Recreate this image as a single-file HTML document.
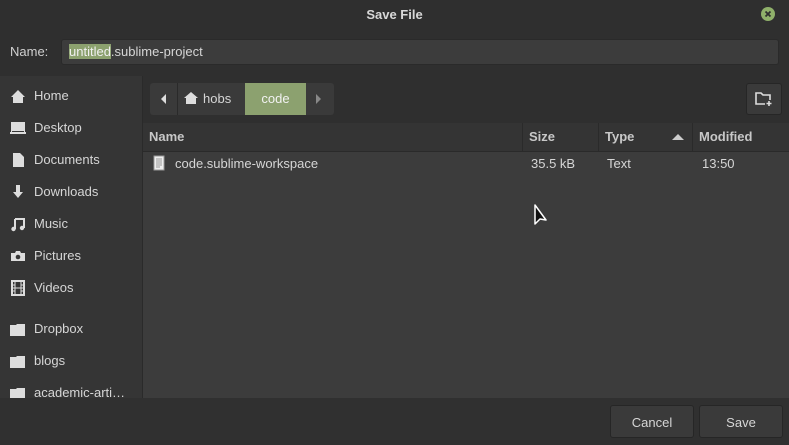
<!DOCTYPE html>
<html><head><style>
*{margin:0;padding:0;box-sizing:border-box}
body{width:789px;height:445px;background:#2f2f2f;font-family:"Liberation Sans","DejaVu Sans",sans-serif;font-size:13px;color:#d6d6d6;position:relative;overflow:hidden}
.a{position:absolute}
.title{left:0;top:0;width:789px;height:30px;text-align:center;line-height:30px;font-weight:bold;color:#d8d8d8;font-size:13px}
.side{left:0;top:76px;width:143px;height:322px;background:#353535;border-right:1px solid #2a2a2a}
.si{position:absolute;left:10px;height:20px;line-height:20px}
.si span{position:absolute;left:24px;white-space:nowrap}
.main{left:143px;top:76px;width:646px;height:322px;background:#3c3c3c}
.bar{left:143px;top:76px;width:646px;height:47px;background:#2f2f2f}
.hdr{left:143px;top:123px;width:646px;height:29px;background:#343434;border-bottom:1px solid #2a2a2a;font-weight:bold;color:#c8c8c8}
.hdr div{position:absolute;top:0;height:28px;line-height:28px}
.sep{width:1px;background:#2a2a2a}
.btn{background:#3a3a3a;border:1px solid #262626;border-radius:3px;text-align:center;line-height:30px}
.bot{left:0;top:398px;width:789px;height:47px;background:#303030}
</style></head><body>
<div class="a title">Save File</div>
<svg class="a" style="left:760px;top:6px" width="16" height="16"><circle cx="8" cy="8" r="7" fill="#8fb06a"/><path d="M5.5 5.5l5 5M10.5 5.5l-5 5" stroke="#2f2f2f" stroke-width="1.8"/></svg>
<div class="a" style="left:10px;top:44px;color:#d0d0d0">Name:</div>
<div class="a" style="left:61px;top:39px;width:718px;height:26px;background:#3c3c3c;border:1px solid #2a2a2a;border-radius:3px"></div>
<div class="a" style="left:69px;top:44px;white-space:nowrap"><span style="background:#8ca16f;color:#f0f0f0">untitled</span>.sublime-project</div>
<div class="a side">
<div class="si" style="top:10px"><svg width="16" height="16" class="a" style="top:2px"><path d="M1 9L8 2l7 7h-2v6H3V9z" fill="#ddd"/></svg><span>Home</span></div>
<div class="si" style="top:42px"><svg width="16" height="16" class="a" style="top:2px"><rect x="1" y="2" width="14" height="11" fill="#ddd"/><rect x="0" y="12" width="16" height="2" fill="#ddd"/><rect x="2" y="11" width="12" height="1" fill="#353535"/></svg><span>Desktop</span></div>
<div class="si" style="top:74px"><svg width="16" height="16" class="a" style="top:2px"><path d="M3 1h7l4 4v10H3z" fill="#ddd"/></svg><span>Documents</span></div>
<div class="si" style="top:106px"><svg width="16" height="16" class="a" style="top:2px"><path d="M6 1h4v7h3l-5 6-5-6h3z" fill="#ddd"/></svg><span>Downloads</span></div>
<div class="si" style="top:138px"><svg width="16" height="16" class="a" style="top:2px"><path d="M5 3h9v9" stroke="#ddd" stroke-width="2" fill="none"/><path d="M5 3v10" stroke="#ddd" stroke-width="2"/><circle cx="3.5" cy="13" r="2.2" fill="#ddd"/><circle cx="12" cy="12" r="2.2" fill="#ddd"/></svg><span>Music</span></div>
<div class="si" style="top:170px"><svg width="16" height="16" class="a" style="top:2px"><path d="M1 5h4l1-2h4l1 2h4v8H1z" fill="#ddd"/><circle cx="8" cy="9" r="2.3" fill="#353535"/></svg><span>Pictures</span></div>
<div class="si" style="top:202px"><svg width="16" height="16" class="a" style="top:2px"><rect x="2" y="1" width="12" height="14" fill="none" stroke="#ddd" stroke-width="2"/><path d="M5 1v14M11 1v14M2 8h12M2 5h3M2 11h3M11 5h3M11 11h3" stroke="#ddd"/></svg><span>Videos</span></div>
<div class="si" style="top:243px"><svg width="16" height="16" class="a" style="top:2px"><path d="M0 4h6l1-1h8v12H0z" fill="#ddd"/></svg><span>Dropbox</span></div>
<div class="si" style="top:275px"><svg width="16" height="16" class="a" style="top:2px"><path d="M0 4h6l1-1h8v12H0z" fill="#ddd"/></svg><span>blogs</span></div>
<div class="si" style="top:307px"><svg width="16" height="16" class="a" style="top:2px"><path d="M0 4h6l1-1h8v12H0z" fill="#ddd"/></svg><span>academic-arti…</span></div>
</div>
<div class="a main"></div>
<div class="a bar"></div>
<div class="a" style="left:150px;top:83px;width:184px;height:32px;background:#3a3a3a;border-radius:3px"></div>
<svg class="a" style="left:158px;top:93px" width="10" height="12"><path d="M8 1L3 6l5 5z" fill="#ddd"/></svg>
<div class="a" style="left:177px;top:83px;width:1px;height:32px;background:#2a2a2a"></div>
<svg class="a" style="left:183px;top:91px" width="16" height="14"><path d="M1 7L8 1l7 6h-2v6H3V7z" fill="#ddd"/></svg>
<div class="a" style="left:203px;top:91px">hobs</div>
<div class="a" style="left:245px;top:83px;width:61px;height:32px;background:#8ca16f;color:#f2f2f2;text-align:center;line-height:32px">code</div>
<svg class="a" style="left:314px;top:93px" width="10" height="12"><path d="M2 1l5 5-5 5z" fill="#888"/></svg>
<div class="a btn" style="left:746px;top:83px;width:36px;height:32px"></div>
<svg class="a" style="left:755px;top:91px" width="18" height="16"><path d="M10 13H1V2h5l2 2h7v5" fill="none" stroke="#ddd" stroke-width="1.6"/><path d="M14 10v5M11.5 12.5h5" stroke="#ddd" stroke-width="1.6"/></svg>
<div class="a hdr">
<div style="left:6px">Name</div>
<div class="sep" style="left:379px"></div>
<div style="left:386px">Size</div>
<div class="sep" style="left:455px"></div>
<div style="left:462px">Type</div>
<svg style="position:absolute;left:529px;top:10px" width="12" height="8"><path d="M0 7L6 1l6 6z" fill="#ccc"/></svg>
<div class="sep" style="left:549px"></div>
<div style="left:556px">Modified</div>
</div>
<svg class="a" style="left:153px;top:155px" width="12" height="16"><path d="M1 1h10v14H1z" fill="#eee" stroke="#999"/><path d="M3 4h6M3 6h6M3 8h6M3 10h6M3 12h4" stroke="#999"/></svg>
<div class="a" style="left:175px;top:156px">code.sublime-workspace</div>
<div class="a" style="left:531px;top:156px">35.5 kB</div>
<div class="a" style="left:607px;top:156px">Text</div>
<div class="a" style="left:702px;top:156px">13:50</div>
<svg class="a" style="left:533px;top:203px" width="18" height="24"><path d="M2 2v19l5-5 6 1z" fill="#111" stroke="#fff" stroke-width="1.5" stroke-linejoin="round"/></svg>
<div class="a bot"></div>
<div class="a btn" style="left:610px;top:405px;width:84px;height:33px;line-height:33px">Cancel</div>
<div class="a btn" style="left:699px;top:405px;width:84px;height:33px;line-height:33px">Save</div>
</body></html>
